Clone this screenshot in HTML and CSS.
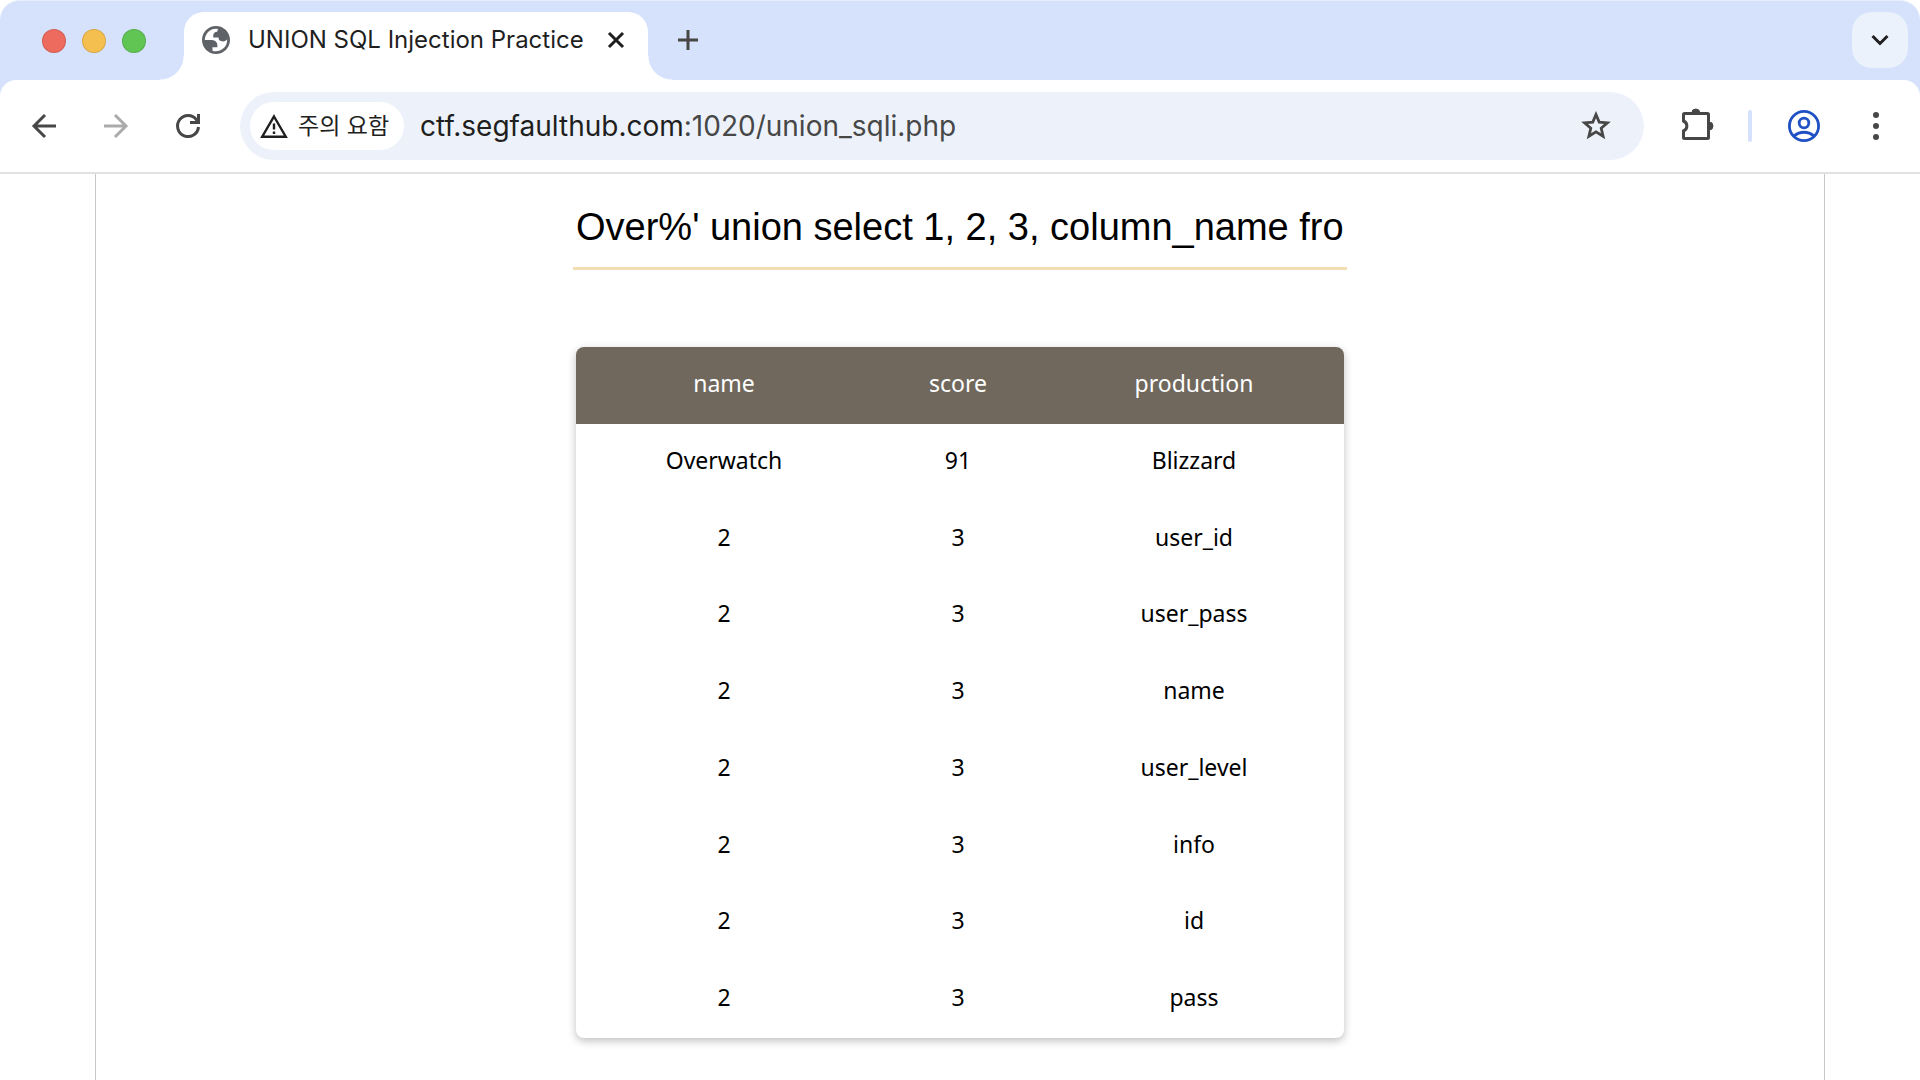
FILE: index.html
```html
<!DOCTYPE html>
<html lang="ko">
<head>
<meta charset="utf-8">
<title>UNION SQL Injection Practice</title>
<link rel="stylesheet" href="styles.css">
</head>
<body>
<header class="browser">
  <div class="tab-strip">
    <div class="lights"><span class="light red"></span><span class="light yellow"></span><span class="light green"></span></div>
    <div class="tab">
      <svg class="globe" viewBox="2 2 20 20" aria-hidden="true"><path fill="#5f6368" fill-rule="evenodd" d="M12 2C6.480 2 2 6.480 2 12s4.480 10 10 10 10-4.480 10-10S17.520 2 12 2zM4 12h4.400c3.407.022 4.922 1.730 4.543 5.127H9.488v2.470a8.004 8.004 0 0 0 10.498-8.083C19.327 12.504 18.332 13 17 13c-2.137 0-3.206-.916-3.206-2.750h-3.748c-.274-2.728.683-4.092 2.870-4.092 0-.975.327-1.597.811-1.970A8.004 8.004 0 0 0 4 12z"/></svg>
      <span class="tab-title">UNION SQL Injection Practice</span>
      <button class="icon-button" aria-label="Close tab"><svg width="18" height="18" viewBox="0 0 18 18"><path d="M2 2l14 14M16 2L2 16" stroke="#1f1f1f" stroke-width="3"/></svg></button>
    </div>
    <button class="icon-button new-tab" aria-label="New tab"><svg width="22" height="22" viewBox="0 0 22 22"><path d="M11 1v20M1 11h20" stroke="#474747" stroke-width="3"/></svg></button>
    <button class="tab-search" aria-label="Search tabs"><svg width="18" height="12" viewBox="0 0 18 12"><path d="M1.500 2L9 9.500 16.500 2" fill="none" stroke="#1f1f1f" stroke-width="3"/></svg></button>
  </div>
  <div class="toolbar">
    <nav class="nav">
      <button class="icon-button" aria-label="Back"><svg width="28" height="28" viewBox="0 0 28 28"><path d="M26 14H4M15 3L4 14l11 11" fill="none" stroke="#474747" stroke-width="3"/></svg></button>
      <button class="icon-button" aria-label="Forward"><svg width="28" height="28" viewBox="0 0 28 28"><path d="M2 14h22M13 3l11 11-11 11" fill="none" stroke="#ababab" stroke-width="3"/></svg></button>
      <button class="icon-button" aria-label="Reload"><svg width="28" height="28" viewBox="0 0 28 28"><path d="M24.500 15A10.500 10.500 0 1 1 22.500 7.800L24.500 10M24.500 2v8.500H16" fill="none" stroke="#474747" stroke-width="3"/></svg></button>
    </nav>
    <div class="address">
      <button class="warning"><svg width="28" height="24" viewBox="0 0 28 24"><path d="M14 2.500L25.800 22.700H2.200z" fill="none" stroke="#1f1f1f" stroke-width="2.400"/><path d="M14 9.500v6M14 17.500v2.500" stroke="#1f1f1f" stroke-width="2.400"/></svg><span>주의 요함</span></button>
      <a class="url" href="#"><span class="host">ctf.segfaulthub.com</span>:1020/union_sqli.php</a>
      <button class="icon-button" aria-label="Bookmark"><svg width="32" height="30" viewBox="0 0 32 30"><path d="M16 3.500l3.200 7.600 8.200.7-6.200 5.400 1.900 8-7.100-4.300-7.100 4.300 1.900-8-6.200-5.400 8.200-.7z" fill="none" stroke="#474747" stroke-width="2.800"/></svg></button>
    </div>
    <div class="actions">
      <button class="icon-button" aria-label="Extensions"><svg width="36" height="36" viewBox="0 0 36 36"><path d="M4.500 5.500h23a1 1 0 0 1 1 1v23a1 1 0 0 1-1 1h-23a1 1 0 0 1-1-1v-6.500a5.400 5.400 0 0 0 0-10V6.500a1 1 0 0 1 1-1z" fill="none" stroke="#474747" stroke-width="3"/><path d="M11.800 5a4 4 0 0 1 8 0zM29 14a4 4 0 0 1 0 8z" fill="#474747" stroke="#474747"/></svg></button>
      <span class="divider"></span>
      <button class="icon-button" aria-label="Profile"><svg width="32" height="32" viewBox="0 0 32 32"><g fill="none" stroke="#1f50c4" stroke-width="2.800"><circle cx="16" cy="16" r="14.600"/><circle cx="16" cy="13" r="4.800"/><path d="M6 26c6-5 14-5 20 0"/></g></svg></button>
      <button class="icon-button" aria-label="Menu"><svg width="32" height="32" viewBox="0 0 32 32" fill="#474747"><circle cx="16" cy="5" r="3"/><circle cx="16" cy="16" r="3"/><circle cx="16" cy="27" r="3"/></svg></button>
    </div>
  </div>
</header>
<main class="page">
  <input class="search" type="text" aria-label="Search" value="Over%' union select 1, 2, 3, column_name from information_schema.columns">
  <table class="results">
    <colgroup><col class="col-name"><col class="col-score"><col class="col-production"></colgroup>
    <thead><tr><th>name</th><th>score</th><th>production</th></tr></thead>
    <tbody>
      <tr><td>Overwatch</td><td>91</td><td>Blizzard</td></tr>
      <tr><td>2</td><td>3</td><td>user_id</td></tr>
      <tr><td>2</td><td>3</td><td>user_pass</td></tr>
      <tr><td>2</td><td>3</td><td>name</td></tr>
      <tr><td>2</td><td>3</td><td>user_level</td></tr>
      <tr><td>2</td><td>3</td><td>info</td></tr>
      <tr><td>2</td><td>3</td><td>id</td></tr>
      <tr><td>2</td><td>3</td><td>pass</td></tr>
    </tbody>
  </table>
</main>
</body>
</html>
```
FILE: styles.css
```css
* { box-sizing: border-box; }
body {
  margin: 0;
  min-height: 100vh;
  display: flex;
  flex-direction: column;
  background: #fff;
  color: #000;
  font-family: "Noto Sans", "Noto Sans CJK KR", sans-serif;
}
button { border: 0; padding: 0; background: none; font: inherit; color: inherit; }
svg { display: block; flex: none; }

.browser {
  border-bottom: 2px solid #e1e1e1;
  font-family: Inter, "Noto Sans CJK KR", sans-serif;
  color: #1f1f1f;
}
.tab-strip {
  display: flex;
  height: 96px;
  margin-bottom: -16px;
  padding: 11px 12px 16px 42px;
  background: #d6e1fc;
  border-top: 1px solid #e6edfd;
  border-radius: 20px 20px 0 0;
}
.lights { display: flex; gap: 16px; width: 142px; padding-top: 17px; }
.light { width: 24px; height: 24px; border-radius: 50%; border: 1px solid rgb(0 0 0 / 12%); }
.red { background: #ed6a5e; }
.yellow { background: #f5bf4f; }
.green { background: #61c554; }

.tab {
  position: relative;
  display: flex;
  align-items: center;
  width: 464px;
  padding: 0 20px 12px 18px;
  background: #fff;
  border-radius: 20px 20px 0 0;
}
.tab::before, .tab::after {
  content: "";
  position: absolute;
  bottom: 0;
  width: 24px;
  height: 24px;
}
.tab::before { right: 100%; background: radial-gradient(circle at 0 0, transparent 23px, #fff 24px); }
.tab::after { left: 100%; background: radial-gradient(circle at 100% 0, transparent 23px, #fff 24px); }
.globe { width: 28px; height: 28px; }
.tab-title { flex: 1; margin-left: 18px; font-size: 24px; line-height: 32px; white-space: nowrap; }
.icon-button { display: flex; align-items: center; justify-content: center; min-width: 24px; height: 32px; }
.new-tab { width: 32px; margin: 12px auto 0 24px; }
.tab-search {
  display: flex;
  align-items: center;
  justify-content: center;
  width: 56px;
  height: 56px;
  border-radius: 20px;
  background: #ecf2fc;
}

.toolbar {
  position: relative;
  display: flex;
  align-items: center;
  height: 92px;
  padding: 0 28px 0 30px;
  background: #fff;
  border-radius: 16px 16px 0 0;
}
.nav { display: flex; gap: 44px; width: 210px; }
.address {
  display: flex;
  align-items: center;
  flex: 1;
  height: 68px;
  padding: 0 32px 0 10px;
  border-radius: 34px;
  background: #edf2fa;
}
.warning {
  display: flex;
  align-items: center;
  gap: 10px;
  width: 154px;
  height: 48px;
  padding-left: 10px;
  border-radius: 24px;
  background: #fff;
  font-size: 23px;
  line-height: 32px;
  white-space: nowrap;
}
.url { flex: 1; margin-left: 16px; color: #474747; font-size: 28px; line-height: 36px; text-decoration: none; }
.host { color: #1f1f1f; }
.actions { display: flex; align-items: center; padding-left: 36px; }
.divider { width: 4px; height: 32px; margin: 0 36px 0 32px; border-radius: 2px; background: #d6e1fc; }
.actions .icon-button:last-child { margin-left: 40px; }

.page {
  box-sizing: content-box;
  flex: 1;
  display: flex;
  flex-direction: column;
  align-items: center;
  width: 90%;
  margin: 0 auto;
  border: 1px solid #c8c8c8;
  border-width: 0 1px;
}
.search {
  width: 774px;
  height: 80px;
  margin-top: 16px;
  padding: 0 3px 2px;
  border: 0;
  border-bottom: 3px solid #f1deb4;
  outline: 0;
  background: none;
  color: #000;
  font: 38px "Liberation Sans", Arial, sans-serif;
}
.results {
  width: 768px;
  height: 691px;
  margin: 77px 0 42px;
  border-spacing: 0;
  table-layout: fixed;
  border-radius: 8px;
  box-shadow: 0 3px 8px rgb(0 0 0 / 25%);
  overflow: hidden;
  font-size: 23px;
  line-height: 32px;
  text-align: center;
}
.results th, .results td { padding: 0 0 5px; font-weight: 400; }
.results th { height: 77px; background: #70685d; color: #fff; }
.col-name { width: 296px; }
.col-score { width: 172px; }
.col-production { width: 300px; }
```
